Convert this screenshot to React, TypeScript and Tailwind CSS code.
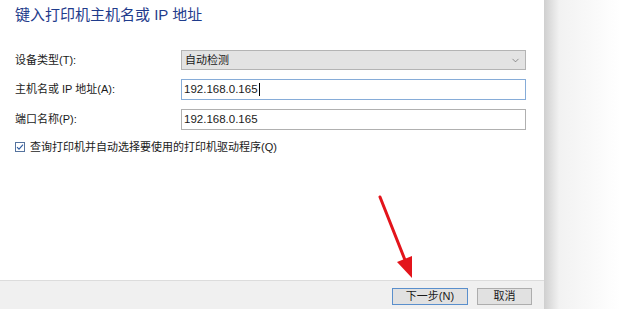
import { ChevronDown } from 'lucide-react'

const font = { fontFamily: '"Liberation Sans", "Noto Sans CJK SC", sans-serif' }

function Field({ label, children }: { label: string; children: React.ReactNode }) {
  return (
    <div className="flex items-center">
      <span className="w-[166px] text-[11px] text-[#1a1a1a]">{label}</span>
      {children}
    </div>
  )
}

function Arrow() {
  return (
    <svg className="pointer-events-none absolute left-0 top-0" width="620" height="309">
      <line x1="380" y1="197" x2="405" y2="260" stroke="#e3141b" strokeWidth="3" strokeLinecap="round" />
      <polygon points="397,262 412,256 412,278" fill="#e3141b" />
    </svg>
  )
}

export default function App() {
  return (
    <div className="relative flex h-[309px] w-[620px] overflow-hidden bg-white" style={font}>
      <div className="flex w-[544px] flex-col bg-white">
        <div className="flex flex-1 flex-col px-[15px]">
          <h1 className="mt-[5px] h-[20px] text-[15px] leading-[20px] text-[#1f3c8c]">
            键入打印机主机名或 IP 地址
          </h1>

          <div className="mt-[25px] flex flex-col gap-[9px]">
            <Field label="设备类型(T):">
              <div className="flex h-[20px] w-[345px] items-center justify-between border border-[#b4b4b4] bg-[#e3e3e3] pl-[3px] pr-[4px]">
                <span className="text-[11px] text-[#1a1a1a]">自动检测</span>
                <ChevronDown className="h-[11px] w-[11px] text-[#666]" strokeWidth={1.5} />
              </div>
            </Field>
            <Field label="主机名或 IP 地址(A):">
              <div className="flex h-[21px] w-[345px] items-center border border-[#86acd8] bg-white pl-[2px]">
                <span className="text-[11.5px] text-[#1a1a1a]">192.168.0.165</span>
                <span className="ml-px h-[13px] w-px bg-black" />
              </div>
            </Field>
            <Field label="端口名称(P):">
              <div className="flex h-[21px] w-[345px] items-center border border-[#b0b0b0] bg-white pl-[2px]">
                <span className="text-[11.5px] text-[#1a1a1a]">192.168.0.165</span>
              </div>
            </Field>
          </div>

          <label className="mt-[9px] flex items-center gap-[5px]">
            <span className="flex h-[10px] w-[10px] items-center justify-center border border-[#55739e] bg-white">
              <svg width="8" height="8" viewBox="0 0 8 8">
                <path d="M1 4.2 L3 6.2 L7 1.6" fill="none" stroke="#2c5aa0" strokeWidth="1.1" />
              </svg>
            </span>
            <span className="text-[11px] text-[#1a1a1a]">查询打印机并自动选择要使用的打印机驱动程序(Q)</span>
          </label>
        </div>

        <div className="flex h-[29px] items-start justify-end gap-[9px] border-t border-[#dcdcdc] bg-[#f0f0f0] pr-[12px] pt-[7px]">
          <button className="flex h-[17px] w-[76px] items-center justify-center border border-[#5a8fcc] bg-[#e1e1e1] text-[11px] text-[#1a1a1a]">
            下一步(N)
          </button>
          <button className="flex h-[17px] w-[55px] items-center justify-center border border-[#adadad] bg-[#e1e1e1] text-[11px] text-[#1a1a1a]">
            取消
          </button>
        </div>
      </div>

      <div className="flex-1 bg-gradient-to-r from-[#cfcfcf] via-[#f2f2f2] via-[20%] to-white" />

      <Arrow />
    </div>
  )
}
